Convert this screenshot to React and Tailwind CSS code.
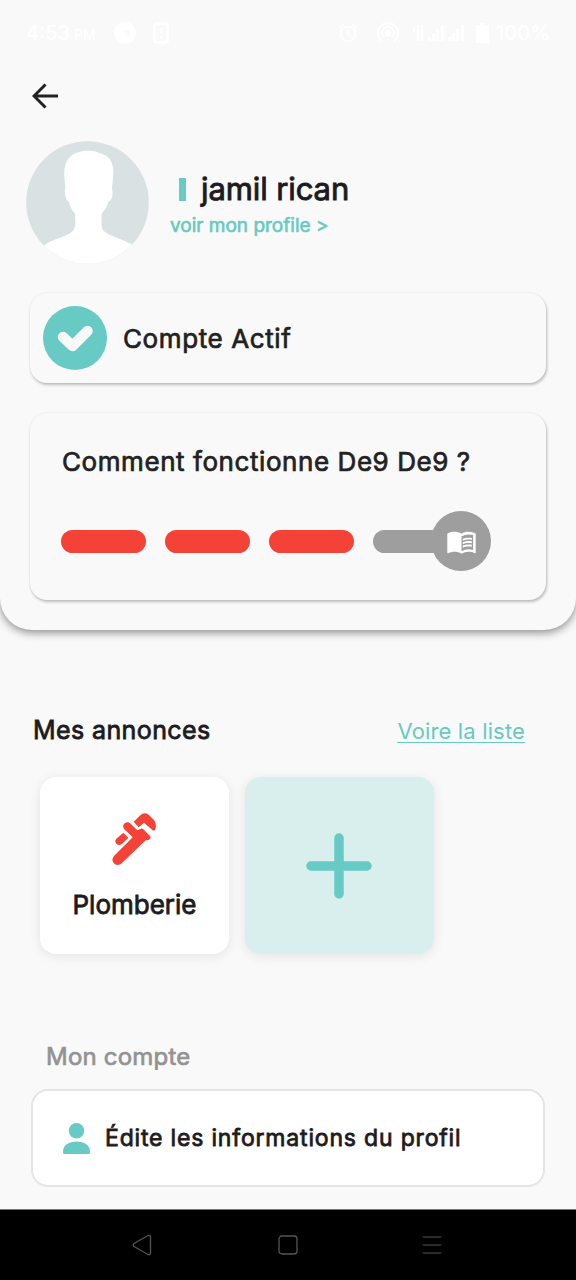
import { MdMenuBook, MdAlarm } from 'react-icons/md'

function StatusBar() {
  return (
    <div className="flex h-[64px] items-center justify-between pl-[26px] pr-[26px] pt-px text-white">
      <div className="flex items-center">
        <span className="text-[20px] font-medium leading-none">4:53</span>
        <span className="ml-1 mt-1 text-[14px] font-medium leading-none">PM</span>
        <svg className="ml-[18px]" width="22" height="22" viewBox="0 0 22 22">
          <circle cx="11" cy="11" r="11" fill="currentColor" />
          <path d="M10 8h6v4a4 4 0 0 1-3 3V11H10z" fill="#f9f9f9" />
        </svg>
        <svg className="ml-[17px]" width="16" height="22" viewBox="0 0 16 22" fill="none" stroke="currentColor" strokeWidth="2.5">
          <rect x="1.5" y="1.5" width="13" height="19" rx="2" />
          <path d="M8 6v6M8 14v2.500" />
        </svg>
      </div>
      <div className="flex items-center">
        <MdAlarm size={22} />
        <svg className="ml-[18px]" width="22" height="22" viewBox="0 0 22 22" fill="none" stroke="currentColor" strokeWidth="2">
          <path d="M5 19a10 10 0 1 1 12 0M7 15a6 6 0 1 1 8 0" />
          <circle cx="11" cy="11" r="2" fill="currentColor" />
        </svg>
        <svg className="ml-[14px]" width="53" height="18" viewBox="0 0 53 18" fill="currentColor">
          <path d="M0 3h2v5H0zM4 1h2v16H4zM8 1h2v16H8zM15 13h3v4h-3zM19 9h3v8h-3zM23 5h3v12h-3zM28 1h3v16h-3zM35 13h3v4h-3zM39 9h3v8h-3zM43 5h3v12h-3zM48 1h3v16h-3z" />
        </svg>
        <svg className="ml-[10px] mr-[7px]" width="13" height="20" viewBox="0 0 13 20" fill="currentColor">
          <path d="M4 0h5v2h4v18H0V2h4z" />
        </svg>
        <span className="text-[20px] font-medium leading-none">100%</span>
      </div>
    </div>
  )
}

function Avatar() {
  return (
    <svg width="123" height="123" viewBox="78 32 370 370" className="shrink-0">
      <clipPath id="avatar">
        <circle cx="263" cy="217" r="184.500" />
      </clipPath>
      <g clipPath="url(#avatar)">
        <rect x="78" y="32" width="370" height="370" fill="#d9e1e2" />
        <path
          d="M132 346C160 327 205 318 219 303C230 290 226 270 225 250C216 240 210 228 207 215C198 210 194 194 195 178C198 174 194 155 193 135C191 88 215 62 262 61C280 61 290 63 298 68C332 74 345 104 340 140C339 158 336 170 337 178C342 194 335 211 326 215C322 230 315 240 306 250C305 270 303 290 310 301C328 319 372 326 397 344L420 402H110Z"
          fill="#fff"
        />
      </g>
    </svg>
  )
}

function Wrench() {
  return (
    <svg className="-ml-0.5" width="44" height="53" viewBox="337 338 132 159" fill="#f44336">
      <path d="M402 364L422 345Q434 334 447 343L463 359Q472 372 467 387Q464 394 459 390L433 367L417 381Z" />
      <path d="M374 387Q366 377 375 369Q384 362 393 370L413 390L422 386Q427 383 431 387L451 407Q455 412 450 417Q445 421 439 419L366 489Q355 499 344 490Q333 479 343 467L399 411Z" />
      <path d="M371 397L386 412L367 430Q358 438 350 430Q344 422 350 415Z" />
    </svg>
  )
}

function ProfileHeader() {
  return (
    <div className="mt-[13px] flex items-center pl-[26px]">
      <Avatar />
      <div className="ml-[21px] mt-[5px]">
        <div className="flex items-center">
          <span className="ml-[9px] h-[23px] w-[7px] bg-[#67cac4]" />
          <h1 className="ml-[15px] text-[31px] leading-[40px] tracking-[-0.1px] text-[#1c1b22] [-webkit-text-stroke:0.9px]">jamil rican</h1>
        </div>
        <a className="mt-[2px] block text-[19px] leading-[30px] text-[#67cabf] [-webkit-text-stroke:0.6px]">voir mon profile &gt;</a>
      </div>
    </div>
  )
}

function ActiveCard() {
  return (
    <div className="mx-[30px] mt-[29px] flex h-[90px] items-center rounded-[17px] bg-[#f9f9f9] pl-[13px] shadow-[1px_2px_3px_rgba(0,0,0,0.24),0_0_2px_rgba(0,0,0,0.08)]">
      <svg width="64" height="64" viewBox="0 0 64 64">
        <circle cx="32" cy="32" r="32" fill="#67cac4" />
        <path d="M20 31L29.500 40L44.500 25" fill="none" stroke="#f9f9f9" strokeWidth="10.500" strokeLinecap="round" strokeLinejoin="round" />
      </svg>
      <span className="ml-4 text-[26px] tracking-[0.6px] text-[#212121] [-webkit-text-stroke:0.7px]">Compte Actif</span>
    </div>
  )
}

function HowItWorks() {
  return (
    <div className="mx-[30px] mt-[30px] h-[187px] rounded-[17px] bg-[#f9f9f9] px-8 pt-[29px] shadow-[1px_2px_3px_rgba(0,0,0,0.24),0_0_2px_rgba(0,0,0,0.08)]">
      <h2 className="whitespace-nowrap text-[26px] leading-[40px] tracking-[0.57px] text-[#212121] [-webkit-text-stroke:0.7px]">
        Comment fonctionne De9 De9 ?
      </h2>
      <div className="-ml-px mt-[29px] flex h-[60px] items-center">
        {[1, 2, 3].map((step) => (
          <span key={step} className="mr-[19px] h-[23px] w-[85px] rounded-full bg-[#f44336]" />
        ))}
        <span className="h-[23px] w-[70px] rounded-l-full bg-[#9e9e9e]" />
        <span className="-ml-[12px] flex h-[60px] w-[60px] items-center justify-center rounded-full bg-[#9e9e9e]">
          <MdMenuBook size={31} color="#fff" />
        </span>
      </div>
    </div>
  )
}

function Listings() {
  return (
    <section>
      <div className="mt-[80px] flex h-[40px] items-center justify-between pl-[33px] pr-[51px]">
        <h2 className="mt-[2px] text-[25px] tracking-[0.4px] text-[#1c1b22] [-webkit-text-stroke:0.8px]">Mes annonces</h2>
        <a className="mt-[2px] border-b-[1.5px] border-[#67cabf] text-[22px] leading-[22px] tracking-[0.15px] text-[#67cabf]">Voire la liste</a>
      </div>
      <div className="mt-[27px] flex gap-4 pl-10">
        <div className="flex h-[177px] w-[189px] flex-col items-center rounded-[16px] bg-white pt-[36px] shadow-[0_2px_12px_rgba(0,0,0,0.09)]">
          <Wrench />
          <span className="mt-[19px] text-[26px] leading-[40px] text-[#1c1b22] [-webkit-text-stroke:0.8px]">Plomberie</span>
        </div>
        <div className="flex h-[177px] w-[189px] items-center justify-center rounded-[16px] bg-[#d9efed] shadow-[0_2px_12px_rgba(0,0,0,0.09)]">
          <svg className="-ml-0.5" width="66" height="66" viewBox="0 0 66 66" stroke="#67cac4" strokeWidth="9.500" strokeLinecap="round">
            <path d="M33 5v56M5 33h56" />
          </svg>
        </div>
      </div>
    </section>
  )
}

function Account() {
  return (
    <section className="mt-[83px]">
      <h2 className="pl-[46px] text-[24px] leading-[40px] tracking-[0.2px] text-[#939393] [-webkit-text-stroke:0.7px]">Mon compte</h2>
      <div className="mx-[31px] mt-[12px] flex h-[98px] items-center rounded-[17px] border-2 border-[#e5e5e5] bg-white pl-[30px]">
        <svg width="27" height="31" viewBox="0 0 27 31" fill="#67cac4">
          <circle cx="13.500" cy="7.700" r="7.700" />
          <path d="M0 28.500C0 22 6 18.500 13.500 18.500S27 22 27 28.500V29.500Q27 31 25.500 31H1.500Q0 31 0 29.500Z" />
        </svg>
        <span className="ml-[15px] whitespace-nowrap text-[23px] tracking-[0.82px] text-[#1c1b22] [-webkit-text-stroke:0.8px]">Édite les informations du profil</span>
      </div>
    </section>
  )
}

function NavBar() {
  return (
    <nav className="mt-auto flex h-[71px] items-center justify-between border-t border-[#777] bg-black pl-[132px] pr-[134px]">
      <svg width="20" height="22" viewBox="0 0 20 22" fill="none" stroke="#555" strokeWidth="1.300">
        <path d="M2 9.500Q0.500 11 2 12.500L16 20.500Q18.500 21 18.500 19V3Q18.500 1 16 1.500Z" />
      </svg>
      <svg className="ml-[2px]" width="20" height="20" viewBox="0 0 20 20" fill="none" stroke="#555" strokeWidth="1.300">
        <rect x="1" y="1" width="18" height="18" rx="3" />
      </svg>
      <svg width="20" height="18" viewBox="0 0 20 18" stroke="#555" strokeWidth="1.200">
        <path d="M0.500 1h19M0.500 9h19M0.500 17h19" />
      </svg>
    </nav>
  )
}

export default function App() {
  return (
    <div className="flex h-[1280px] w-[576px] flex-col overflow-hidden bg-[#f9f9f9] font-['Inter',sans-serif]">
      <header className="h-[630px] shrink-0 rounded-b-[32px] bg-[#f9f9f9] shadow-[0_3px_8px_rgba(0,0,0,0.42)]">
        <StatusBar />
        <div className="flex h-[64px] items-center pl-8">
          <svg width="26" height="26" viewBox="0 0 26 26" fill="none" stroke="#222" strokeWidth="3">
            <path d="M13.500 1.500L2 13L13.500 24.500M2 13H26" />
          </svg>
        </div>
        <ProfileHeader />
        <ActiveCard />
        <HowItWorks />
      </header>
      <Listings />
      <Account />
      <NavBar />
    </div>
  )
}
